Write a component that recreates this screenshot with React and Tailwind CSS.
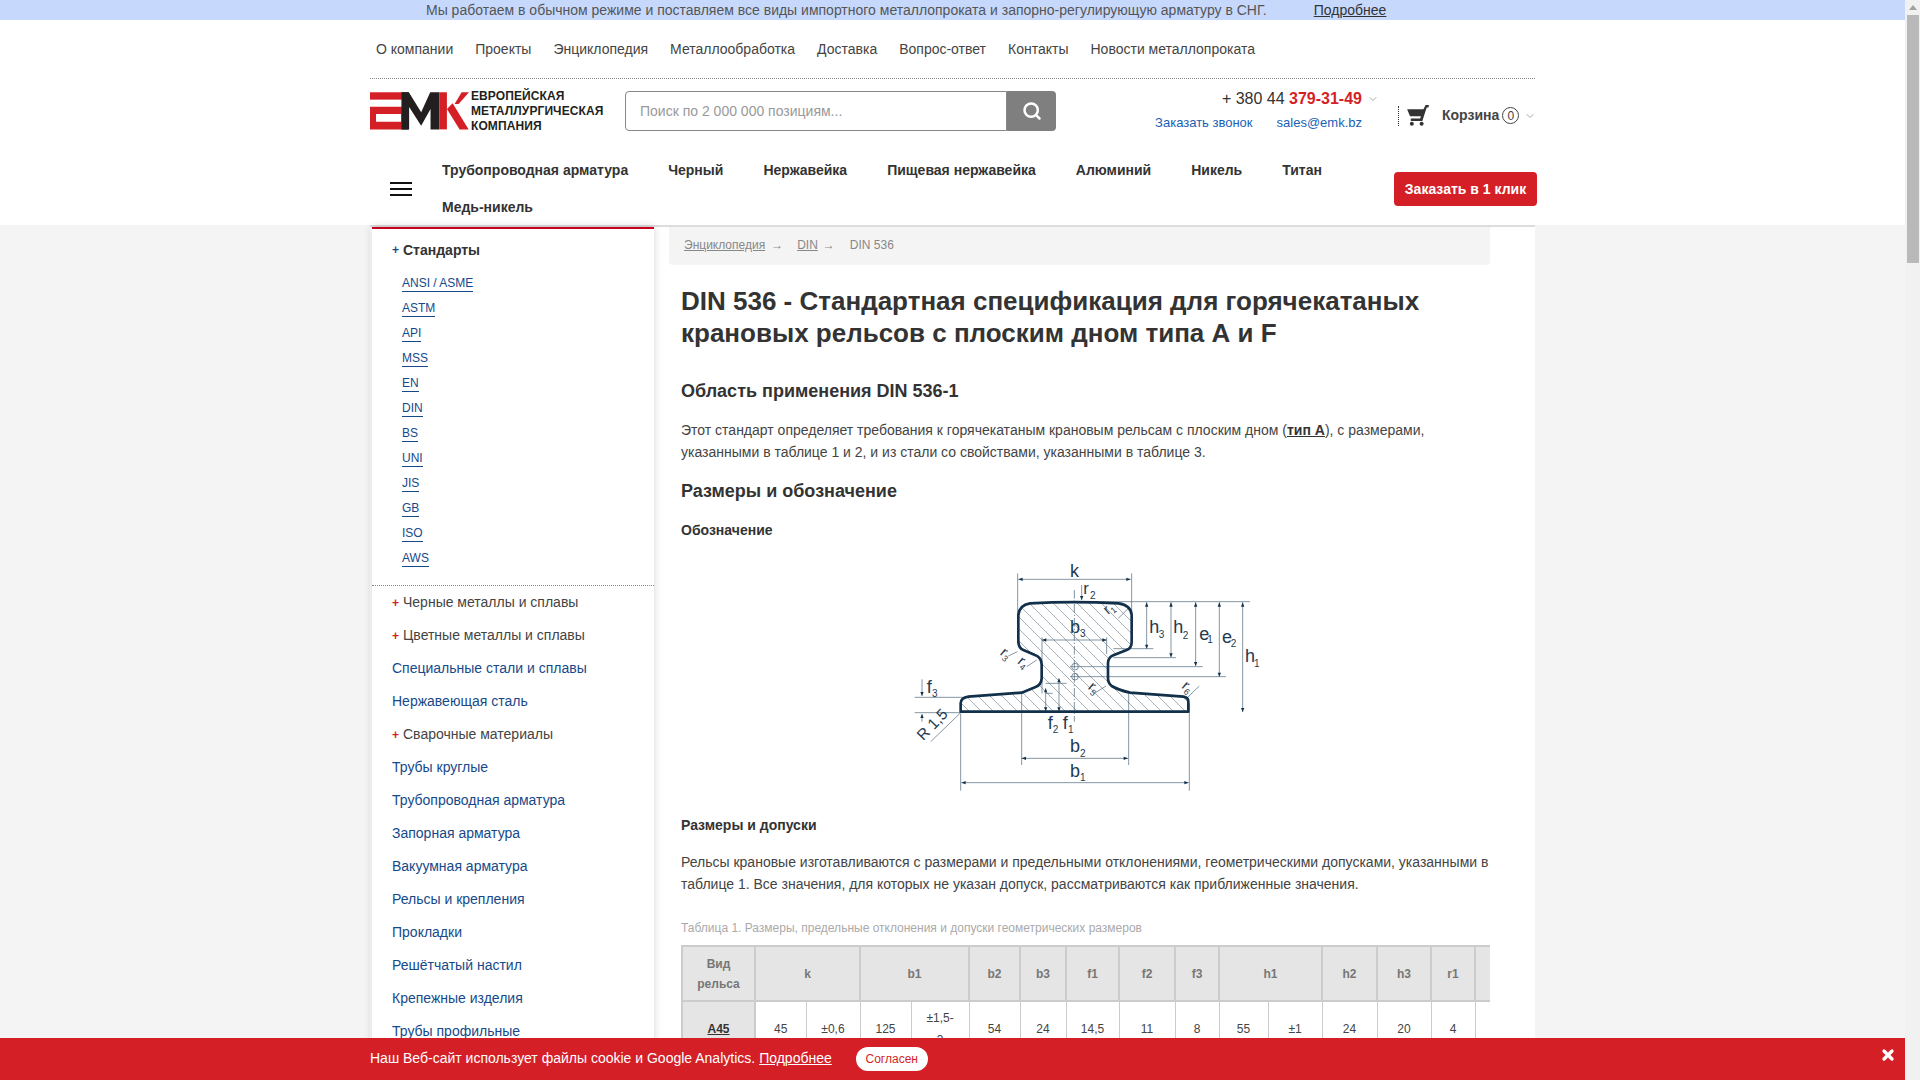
import { Search, ChevronDown, X } from 'lucide-react';

const topLinks = ['О компании', 'Проекты', 'Энциклопедия', 'Металлообработка', 'Доставка', 'Вопрос-ответ', 'Контакты', 'Новости металлопроката'];
const mainLinks = ['Трубопроводная арматура', 'Черный', 'Нержавейка', 'Пищевая нержавейка', 'Алюминий', 'Никель', 'Титан', 'Медь-никель'];
const standards = ['ANSI / ASME', 'ASTM', 'API', 'MSS', 'EN', 'DIN', 'BS', 'UNI', 'JIS', 'GB', 'ISO', 'AWS'];
const sideItems = [
  { name: 'Черные металлы и сплавы', plus: true },
  { name: 'Цветные металлы и сплавы', plus: true },
  { name: 'Специальные стали и сплавы' },
  { name: 'Нержавеющая сталь' },
  { name: 'Сварочные материалы', plus: true },
  { name: 'Трубы круглые' },
  { name: 'Трубопроводная арматура' },
  { name: 'Запорная арматура' },
  { name: 'Вакуумная арматура' },
  { name: 'Рельсы и крепления' },
  { name: 'Прокладки' },
  { name: 'Решётчатый настил' },
  { name: 'Крепежные изделия' },
  { name: 'Трубы профильные' },
];

const colWidths = [73, 51, 54, 51, 58, 51, 46, 53, 56, 44, 49, 54, 55, 54, 44, 60];
const headCells = [
  ['k', 2], ['b1', 2], ['b2', 1], ['b3', 1], ['f1', 1], ['f2', 1], ['f3', 1], ['h1', 2], ['h2', 1], ['h3', 1], ['r1', 1],
];
const rowCells = ['45', '±0,6', '125', '±1,5-3', '54', '24', '14,5', '11', '8', '55', '±1', '24', '20', '4'];

function Logo() {
  return (
    <div className="flex w-[235px] shrink-0 items-start">
      <svg width="99" height="38" viewBox="15 22 296 112" className="shrink-0">
        <rect x="15" y="22" width="94" height="22" fill="#d51f26" />
        <path d="M15 65H109V87H33V110H109V133H15Z" fill="#d51f26" />
        <path d="M109 22H130L143 44H109Z" fill="#231f20" />
        <path d="M109 65H128L130 133H109Z" fill="#231f20" />
        <path d="M109 22H131L168 82L195 22H222V133H196V72L168 122L132 66V133H109Z" fill="#231f20" />
        <path d="M222 22H245V133H222Z" fill="#d51f26" />
        <path d="M268 57L289 22H311L280 57Z" fill="#d51f26" />
        <path d="M245 72L262 55L310 133H283Z" fill="#d51f26" />
      </svg>
      <div className="ml-[2px] mt-[-3px] whitespace-nowrap text-[12px] font-bold leading-[15px] tracking-[0.1px] text-[#231f20]">
        <div>ЕВРОПЕЙСКАЯ</div>
        <div>МЕТАЛЛУРГИЧЕСКАЯ</div>
        <div>КОМПАНИЯ</div>
      </div>
    </div>
  );
}

function CartIcon() {
  return (
    <svg width="22" height="21" viewBox="0 0 60 58" className="shrink-0" fill="#333">
      <polygon points="0,12 45,12 51,0 60,0 59,7 54,7 42,44 10,44 10,37 36,37 38,31 8,31" />
      <circle cx="13" cy="52" r="5.5" />
      <circle cx="40" cy="52" r="5.5" />
    </svg>
  );
}

function RailDrawing() {
  const outline = 'M242 485H925V455Q925 442 910 440L750 428Q715 420 695 408Q684 400 684 385V340Q684 322 700 316L740 300Q755 295 755 275V195Q753 165 715 160Q580 153 450 160Q418 165 415 195V275Q416 295 430 300L465 315Q485 322 485 345V385Q484 405 465 412L425 428L265 440Q243 443 242 460Z';
  const labels = [
    ['k', 570, 80, 54], ['r', 610, 132, 50], ['2', 630, 148, 30], ['b', 570, 250, 54], ['3', 600, 262, 30],
    ['h', 808, 250, 54], ['3', 836, 264, 30], ['h', 880, 250, 54], ['2', 908, 266, 30], ['e', 958, 270, 54], ['1', 982, 278, 30],
    ['e', 1026, 280, 54], ['2', 1052, 290, 30], ['h', 1095, 337, 54], ['1', 1122, 350, 30],
    ['f', 140, 428, 54], ['3', 156, 440, 30], ['f', 503, 537, 54], ['2', 518, 550, 30], ['f', 548, 537, 54], ['1', 564, 550, 30],
    ['b', 570, 607, 54], ['2', 600, 620, 30], ['b', 570, 682, 54], ['1', 600, 694, 30],
  ];
  const dims = 'M413 70V280M755 70V190M415 88H752M605 105V150M800 157V296M873 157V322M947 157V348M1018 157V380M1088 157V486M600 155H1110M700 296H820M700 323H888M570 350H968M570 380H1038M104 442H265M104 488H240M126 388V438M126 492V515M242 490V722M928 460V722M425 430V645M746 430V645M425 625H744M244 698H926M486 270H680M486 262V430M680 262V312M497 400H560M497 430H518M497 415V484M537 385V484M152 575L240 490M920 445L958 408M715 205L745 175M678 408L640 432M412 305L385 318M470 330L440 350';
  const arrows = 'M605 150L600 138H610ZM800 157L795 170H805ZM800 296L795 284H805ZM873 157L868 170H878ZM873 322L868 310H878ZM947 157L942 170H952ZM947 348L942 336H952ZM1018 157L1013 170H1023ZM1018 380L1013 368H1023ZM1088 157L1083 170H1093ZM1088 486L1083 474H1093ZM415 88L428 83V93ZM752 88L739 83V93ZM425 625L438 620V630ZM744 625L731 620V630ZM244 698L257 693V703ZM926 698L913 693V703ZM486 270L499 265V275ZM680 270L667 265V275ZM126 438L121 426H131ZM126 492L121 504H131ZM497 484L492 472H502ZM537 484L532 472H542ZM497 415L492 427H502ZM537 385L532 397H542Z';
  const rotated = [
    ['1', 684, 195, -40], ['3', 358, 312, 40], ['4', 410, 338, 40], ['5', 622, 415, 40], ['6', 903, 412, 40],
  ];

  return (
    <svg width="400" height="260" viewBox="0 0 1200 780" className="block">
      <defs>
        <pattern id="hatch" width="36" height="36" patternUnits="userSpaceOnUse">
          <path d="M-9 -9L45 45M-9 27L9 45M27 -9L45 9" stroke="#55697a" strokeWidth="1.6" />
        </pattern>
      </defs>
      <path d={outline} fill="url(#hatch)" />
      <path d={dims} stroke="#3f5a6e" strokeWidth="2.4" fill="none" opacity="0.8" />
      <path d="M583 120V515" stroke="#3f5a6e" strokeWidth="2" strokeDasharray="26 6 4 6" fill="none" />
      <circle cx="585" cy="350" r="10" fill="none" stroke="#3f5a6e" strokeWidth="2" />
      <circle cx="585" cy="380" r="10" fill="none" stroke="#3f5a6e" strokeWidth="2" />
      <path d={outline} fill="none" stroke="#12304a" strokeWidth="8" strokeLinejoin="round" />
      <path d={arrows} fill="#12304a" />
      {labels.map(([t, x, y, s], i) => (
        <text key={i} x={x} y={y} fontSize={s} fill="#1f3a50" fontFamily="Liberation Sans, sans-serif">{t}</text>
      ))}
      <text x="130" y="574" fontSize="46" fill="#1f3a50" fontFamily="Liberation Sans, sans-serif" transform="rotate(-46 130 574)">R 1,5</text>
      {rotated.map(([n, x, y, a]) => (
        <text key={n} x={x} y={y} fontSize="44" fill="#1f3a50" fontFamily="Liberation Sans, sans-serif" transform={`rotate(${a} ${x} ${y})`}>
          r<tspan fontSize="26" dy="8">{n}</tspan>
        </text>
      ))}
    </svg>
  );
}

function Sidebar() {
  return (
    <aside className="ml-[2px] w-[282px] shrink-0 self-start border-t-[2px] border-[#c8001e] bg-white shadow-[0_0_8px_rgba(0,0,0,0.18)]">
      <div className="border-b border-dotted border-[#888] pb-[17px] pt-[12px]">
        <div className="flex h-[18px] items-center pl-[20px] text-[14px] font-bold leading-[18px] text-[#333]">
          <span className="w-[11px] text-[12px] text-[#16498a]">+</span>
          Стандарты
        </div>
        <ul className="mt-[16px] flex flex-col gap-[7px] pl-[30px]">
          {standards.map(s => (
            <li key={s} className="flex h-[18px]">
              <a className="h-[17px] border-b border-[#16498a] text-[12px] leading-[16px] text-[#16498a]">{s}</a>
            </li>
          ))}
        </ul>
      </div>
      <ul className="pl-[20px]">
        {sideItems.map(item => (
          <li key={item.name} className="flex h-[33px] items-center text-[14px]">
            {item.plus ? (
              <>
                <span className="w-[11px] text-[12px] font-bold text-[#d51f26]">+</span>
                <span className="text-[#444]">{item.name}</span>
              </>
            ) : (
              <span className="text-[#16498a]">{item.name}</span>
            )}
          </li>
        ))}
      </ul>
    </aside>
  );
}

function SpecTable() {
  return (
    <div className="mt-[8px] w-[809px] overflow-hidden">
      <table className="w-[853px] table-fixed border-collapse text-[12px] text-[#444]">
        <colgroup>
          {colWidths.map((w, i) => <col key={i} style={{ width: w }} />)}
        </colgroup>
        <thead>
          <tr className="h-[55px] bg-[#e5e5e5] font-bold text-[#777]">
            <th className="border-2 border-[#ccc] leading-[20px] font-bold">Вид<br />рельса</th>
            {headCells.map(([t, span]) => (
              <th key={t} colSpan={span} className="border-2 border-[#ccc] font-bold">{t}</th>
            ))}
            <th className="border-2 border-[#ccc]" />
          </tr>
        </thead>
        <tbody>
          <tr>
            <td className="border-2 border-[#ccc] bg-[#e5e5e5] py-[5px] text-center font-bold text-[#333] underline">A45</td>
            {rowCells.map((c, i) => (
              <td key={i} className="border border-[#ccc] px-[14px] py-[5px] text-center leading-[22px]">{c}</td>
            ))}
            <td className="border border-[#ccc]" />
          </tr>
        </tbody>
      </table>
    </div>
  );
}

export default function App() {
  return (
    <div className="flex h-screen overflow-hidden bg-white [font-family:'Liberation_Sans',Arial,sans-serif]">
      <div className="relative min-w-0 flex-1 overflow-hidden">
        <div className="h-5 bg-[#c6d9fd] text-[14px] leading-[20px]">
          <div className="mx-auto flex w-[1165px] pl-[56px]">
            <span className="text-[#555]">Мы работаем в обычном режиме и поставляем все виды импортного металлопроката и запорно-регулирующую арматуру в СНГ.</span>
            <a className="ml-[47px] text-[#333] underline">Подробнее</a>
          </div>
        </div>

        <header className="mx-auto w-[1165px]">
          <nav className="flex h-[59px] items-center gap-[22px] border-b border-dotted border-[#888] pl-[6px] text-[14px] text-[#444]">
            {topLinks.map(l => <a key={l}>{l}</a>)}
          </nav>

          <div className="flex h-[74px] items-start">
            <div className="mt-[13px]"><Logo /></div>
            <div className="ml-[20px] mt-[12px] flex h-[40px] w-[431px] shrink-0">
              <div className="flex flex-1 items-center rounded-l-[4px] border border-[#888] pl-[14px] text-[14px] text-[#999]">
                Поиск по 2 000 000 позициям...
              </div>
              <button className="flex w-[49px] items-center justify-center rounded-r-[4px] bg-[#7f7f7f] text-white">
                <Search size={20} strokeWidth={3} />
              </button>
            </div>
            <div className="ml-[83px] mt-[9px] flex w-[223px] shrink-0 flex-col items-end">
              <div className="flex h-[22px] items-center text-[16px] text-[#333]">
                <span>+ 380 44&nbsp;<b className="text-[#d51f26]">379-31-49</b></span>
                <ChevronDown size={12} className="ml-[5px] -mr-[17px] text-[#aaa]" />
              </div>
              <div className="mt-[3px] flex gap-[24px] text-[13px] leading-[20px] text-[#1a5fb4]">
                <a>Заказать звонок</a>
                <a>sales@emk.bz</a>
              </div>
            </div>
            <div className="ml-[36px] mt-[26px] flex shrink-0 items-center">
              <span className="mr-[8px] h-[20px] border-l border-dotted border-[#333]" />
              <CartIcon />
              <span className="ml-[13px] text-[14px] font-bold text-[#444]">Корзина</span>
              <span className="ml-[3px] flex h-[17px] w-[17px] items-center justify-center rounded-full border border-[#444] text-[12px] text-[#444]">0</span>
              <ChevronDown size={12} className="ml-[5px] text-[#aaa]" />
            </div>
          </div>

          <div className="flex h-[72px] items-start">
            <div className="ml-[20px] mt-[29px] flex w-[22px] shrink-0 flex-col gap-[4px]">
              <span className="h-[2px] bg-[#111]" />
              <span className="h-[2px] bg-[#111]" />
              <span className="h-[2px] bg-[#111]" />
            </div>
            <div className="ml-[30px] mt-[-1px] flex w-[900px] flex-wrap gap-x-[40px] text-[14px] font-bold leading-[37px] text-[#333]">
              {mainLinks.map(l => <a key={l}>{l}</a>)}
            </div>
            <button className="ml-[52px] mt-[19px] h-[34px] w-[143px] shrink-0 -mr-[2px] rounded-[4px] bg-[#d51f26] text-[14px] font-bold text-white">
              Заказать в 1 клик
            </button>
          </div>
        </header>

        <div className="bg-[#f4f4f4]">
          <div className="mx-auto flex w-[1165px] border-t-[2px] border-[#ddd] bg-white">
            <Sidebar />
            <main className="ml-[15px] w-[821px]">
              <div className="flex h-[38px] items-center rounded-b-[4px] bg-[#f4f4f4] pb-[3px] pl-[15px] text-[12px] text-[#888]">
                <a className="underline">Энциклопедия</a>
                <span className="ml-[6px]">→</span>
                <a className="ml-[14px] underline">DIN</a>
                <span className="ml-[5px]">→</span>
                <span className="ml-[15px]">DIN 536</span>
              </div>
              <div className="pl-[12px] text-[14px] leading-[22px] text-[#444]">
                <h1 className="mt-[20px] text-[26px] font-bold leading-[32px] text-[#333]">
                  DIN 536 - Стандартная спецификация для горячекатаных<br />крановых рельсов с плоским дном типа А и F
                </h1>
                <h2 className="mt-[30px] text-[18px] font-bold leading-[24px] text-[#333]">Область применения DIN 536-1</h2>
                <p className="mt-[16px]">
                  Этот стандарт определяет требования к горячекатаным крановым рельсам с плоским дном (<b className="text-[#333] underline">тип А</b>), с размерами,<br />
                  указанными в таблице 1 и 2, и из стали со свойствами, указанными в таблице 3.
                </p>
                <h2 className="mt-[16px] text-[18px] font-bold leading-[24px] text-[#333]">Размеры и обозначение</h2>
                <p className="mt-[16px] font-bold text-[#333]">Обозначение</p>
                <div className="ml-[199px] mt-[9px]"><RailDrawing /></div>
                <p className="mt-[4px] font-bold text-[#333]">Размеры и допуски</p>
                <p className="mt-[15px] w-[809px]">
                  Рельсы крановые изготавливаются с размерами и предельными отклонениями, геометрическими допусками, указанными в<br />
                  таблице 1. Все значения, для которых не указан допуск, рассматриваются как приближенные значения.
                </p>
                <p className="mt-[24px] text-[12px] leading-[18px] text-[#aaa]">Таблица 1. Размеры, предельные отклонения и допуски геометрических размеров</p>
                <SpecTable />
              </div>
            </main>
          </div>
        </div>

        <div className="absolute inset-x-0 bottom-0 h-[42px] bg-[#d51f26] pb-px text-[14px] text-white">
          <div className="mx-auto flex h-full w-[1165px] items-center">
            <span>Наш Веб-сайт использует файлы cookie и Google Analytics.</span>
            <a className="ml-[4px] underline">Подробнее</a>
            <button className="ml-[24px] mt-px h-[24px] w-[72px] rounded-full bg-white text-[12px] text-[#d51f26]">Согласен</button>
          </div>
          <X size={16} strokeWidth={5} className="absolute right-[9px] top-[9px]" />
        </div>
      </div>

      <div className="flex w-[15px] shrink-0 flex-col items-center bg-[#f1f1f1]">
        <span className="mt-[5px] h-0 w-0 border-x-[4px] border-b-[5px] border-x-transparent border-b-[#a3a3a3]" />
        <span className="mt-[5px] h-[248px] w-[12px] bg-[#b9b9b9]" />
      </div>
    </div>
  );
}
